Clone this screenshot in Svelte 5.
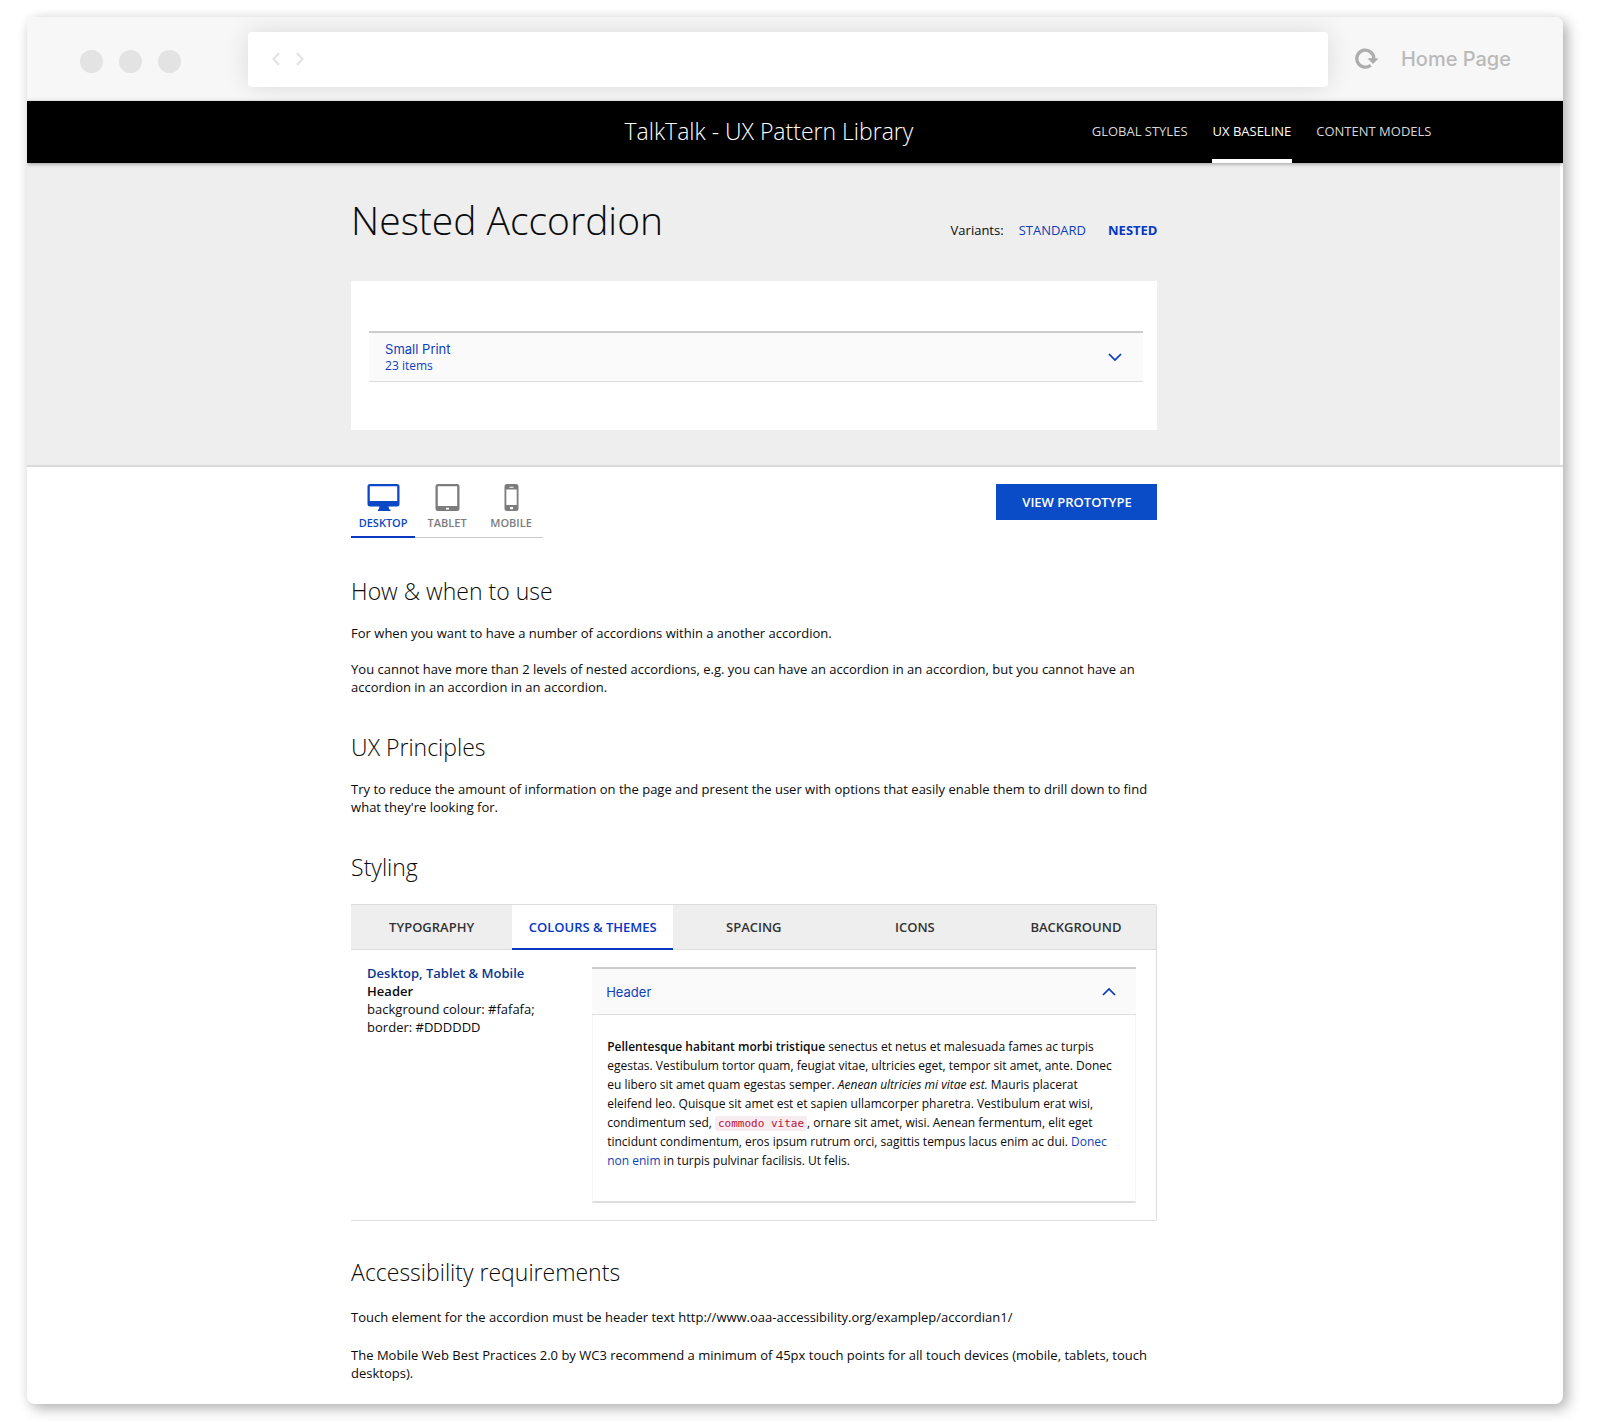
<script>
  const nav = ['GLOBAL STYLES', 'UX BASELINE', 'CONTENT MODELS'];
  const tabs = ['TYPOGRAPHY', 'COLOURS & THEMES', 'SPACING', 'ICONS', 'BACKGROUND'];
  let section = $state('UX BASELINE');
  let device = $state('desktop');
  let tab = $state('COLOURS & THEMES');
</script>

{#snippet chevron(up)}
  <svg class="chevron" class:up width="14" height="10" viewBox="0 0 14 10" aria-hidden="true">
    <path d="M1 2 7 8 13 2" fill="none" stroke="#0638c4" stroke-width="1.700" />
  </svg>
{/snippet}

<div class="window">
  <div class="chrome">
    <div class="dots"><span></span><span></span><span></span></div>
    <div class="address">
      <button aria-label="Back">
        <svg width="8" height="14" viewBox="0 0 8 14"><path d="M7 1 1.500 7 7 13" fill="none" stroke="#e2e2e2" stroke-width="2" /></svg>
      </button>
      <button aria-label="Forward">
        <svg width="8" height="14" viewBox="0 0 8 14"><path d="M1 1 6.500 7 1 13" fill="none" stroke="#e2e2e2" stroke-width="2" /></svg>
      </button>
    </div>
    <div class="actions">
      <button aria-label="Reload">
        <svg width="24" height="22" viewBox="0 0 24 22">
          <path d="M15.700 17.200A8.500 8.500 0 1 1 18.800 11.500" fill="none" stroke="#adadad" stroke-width="3.300" />
          <path d="M12.500 10.500 18 10 23.500 10.500 18 16z" fill="#adadad" />
        </svg>
      </button>
      <a href="#home">Home Page</a>
    </div>
  </div>

  <header>
    <div class="brand">TalkTalk - UX Pattern Library</div>
    <nav>
      {#each nav as item}
        <a href="#nav" class:active={section === item} onclick={() => (section = item)}>{item}</a>
      {/each}
    </nav>
  </header>

  <div class="hero">
    <div class="column">
      <div class="title">
        <h1>Nested Accordion</h1>
        <div class="variants">
          <span>Variants:</span>
          <a href="#standard">STANDARD</a>
          <a href="#nested" class="active">NESTED</a>
        </div>
      </div>
      <div class="preview">
        <button class="accordion" aria-expanded="false">
          <span class="labels"><span class="name">Small Print</span><span class="count">23 items</span></span>
          {@render chevron(false)}
        </button>
      </div>
    </div>
  </div>

  <main>
    <div class="column">
      <div class="toolbar">
        <div class="devices" role="tablist" aria-label="Device">
          <button role="tab" aria-selected={device === 'desktop'} onclick={() => (device = 'desktop')}>
            <svg width="33" height="28" viewBox="0 0 33 28" fill="currentColor">
              <path fill-rule="evenodd" d="M3 0h27a2.500 2.500 0 0 1 2.500 2.500v17.500a2.500 2.500 0 0 1-2.500 2.500h-8.500l.8 3h1.200V27H11v-1.500h.7l.8-3H3A2.500 2.500 0 0 1 .5 20V2.500A2.500 2.500 0 0 1 3 0zM2.800 2.200V17h27.400V2.200z" />
            </svg>
            DESKTOP
          </button>
          <button role="tab" aria-selected={device === 'tablet'} onclick={() => (device = 'tablet')}>
            <svg width="25" height="28" viewBox="0 0 25 28" fill="currentColor">
              <path fill-rule="evenodd" d="M3 0h19A2.500 2.500 0 0 1 24.500 2.500v22A2.500 2.500 0 0 1 22 27H3a2.500 2.500 0 0 1-2.500-2.500v-22A2.500 2.500 0 0 1 3 0zM2.800 2.200V22h19.400V2.200zM11 23.700v1.800h3v-1.800z" />
            </svg>
            TABLET
          </button>
          <button role="tab" aria-selected={device === 'mobile'} onclick={() => (device = 'mobile')}>
            <svg width="15" height="28" viewBox="0 0 15 28" fill="currentColor">
              <path fill-rule="evenodd" d="M3 0h9A2.500 2.500 0 0 1 14.500 2.500v22A2.500 2.500 0 0 1 12 27H3a2.500 2.500 0 0 1-2.500-2.500v-22A2.500 2.500 0 0 1 3 0zM2.300 5.500V21h10.400V5.500zM5.500 2.800v1h4v-1zM6 23v2.300h3V23z" />
            </svg>
            MOBILE
          </button>
        </div>
        <button class="primary">VIEW PROTOTYPE</button>
      </div>

      <section>
        <h2>How &amp; when to use</h2>
        <p>For when you want to have a number of accordions within a another accordion.</p>
        <p>You cannot have more than 2 levels of nested accordions, e.g. you can have an accordion in an accordion, but you cannot have an accordion in an accordion in an accordion.</p>
      </section>

      <section>
        <h2>UX Principles</h2>
        <p>Try to reduce the amount of information on the page and present the user with options that easily enable them to drill down to find what they're looking for.</p>
      </section>

      <section>
        <h2>Styling</h2>
        <div class="panel">
          <div class="tabs" role="tablist" aria-label="Styling">
            {#each tabs as item}
              <button role="tab" aria-selected={tab === item} onclick={() => (tab = item)}>{item}</button>
            {/each}
          </div>
          <div class="panel-body">
            <div class="spec">
              <h3>Desktop, Tablet &amp; Mobile</h3>
              <strong>Header</strong>
              <div>background colour: #fafafa;</div>
              <div>border: #DDDDDD</div>
            </div>
            <div class="example">
              <button class="accordion open" aria-expanded="true">
                <span class="name">Header</span>
                {@render chevron(true)}
              </button>
              <div class="copy">
                <b>Pellentesque habitant morbi tristique</b> senectus et netus et malesuada fames ac turpis egestas. Vestibulum tortor quam, feugiat vitae, ultricies eget, tempor sit amet, ante. Donec eu libero sit amet quam egestas semper. <em>Aenean ultricies mi vitae est.</em> Mauris placerat eleifend leo. Quisque sit amet est et sapien ullamcorper pharetra. Vestibulum erat wisi, condimentum sed, <code>commodo vitae</code>, ornare sit amet, wisi. Aenean fermentum, elit eget tincidunt condimentum, eros ipsum rutrum orci, sagittis tempus lacus enim ac dui. <a href="#donec">Donec non enim</a> in turpis pulvinar facilisis. Ut felis.
              </div>
            </div>
          </div>
        </div>
      </section>

      <section class="relaxed">
        <h2>Accessibility requirements</h2>
        <p>Touch element for the accordion must be header text http://www.oaa-accessibility.org/examplep/accordian1/</p>
        <p>The Mobile Web Best Practices 2.0 by WC3 recommend a minimum of 45px touch points for all touch devices (mobile, tablets, touch desktops).</p>
      </section>
    </div>
  </main>
</div>

<style>
  :global(body) {
    background: #fff;
    color: #0a0a0a;
    font: 13px/18px 'Open Sans', 'Noto Sans', sans-serif;
  }
  * {
    box-sizing: border-box;
  }
  a {
    color: #0d3fb8;
    text-decoration: none;
  }
  button {
    margin: 0;
    padding: 0;
    border: 0;
    background: none;
    color: inherit;
    font: inherit;
    cursor: pointer;
  }
  svg {
    display: block;
    flex: none;
  }
  h1, h2, h3, p {
    margin: 0;
  }
  .window {
    margin: 17px 34px 18px 27px;
    border-radius: 8px;
    overflow: hidden;
    background: #fff;
    box-shadow: 5px 5px 14px rgba(0, 0, 0, 0.28), 0 0 12px rgba(0, 0, 0, 0.06);
  }

  .chrome {
    display: flex;
    align-items: center;
    height: 84px;
    padding: 0 52px 0 53px;
    background: #f7f7f7;
    overflow: hidden;
  }
  .dots {
    display: flex;
    gap: 16px;
    padding-top: 4px;
    margin-right: 67px;
  }
  .dots span {
    width: 23px;
    height: 23px;
    border-radius: 50%;
    background: #e3e3e3;
  }
  .address {
    flex: 1;
    display: flex;
    align-items: center;
    gap: 16px;
    height: 55px;
    padding-left: 24px;
    border-radius: 4px;
    background: #fff;
    box-shadow: 0 0 24px rgba(0, 0, 0, 0.12);
  }
  .actions {
    display: flex;
    align-items: center;
    gap: 22px;
    margin-left: 27px;
  }
  .actions a {
    color: #bababa;
    font: 500 20px/24px Inter, sans-serif;
  }

  header {
    position: relative;
    display: flex;
    justify-content: space-between;
    height: 62px;
    padding: 0 8.5% 0 38.9%;
    background: #000;
    color: #fff;
    box-shadow: 0 1px 4px rgba(0, 0, 0, 0.35);
  }
  .brand {
    font-size: 23px;
    font-weight: 300;
    line-height: 61px;
    white-space: nowrap;
  }
  nav {
    display: flex;
    gap: 23px;
  }
  nav a {
    padding: 0 1px;
    border-bottom: 4px solid transparent;
    color: #d8d8d8;
    line-height: 60px;
    white-space: nowrap;
  }
  nav a.active {
    border-color: #fff;
    color: #fff;
    font-weight: 500;
  }

  .column {
    width: 52.5%;
    margin-left: 21.1%;
  }
  .hero {
    height: 304px;
    border-bottom: 2px solid #dadada;
    background: #eee;
    box-shadow: inset -3px 0 #fff;
  }
  .title {
    display: flex;
    justify-content: space-between;
    align-items: baseline;
    padding-top: 29px;
  }
  h1 {
    font-size: 39px;
    font-weight: 300;
    line-height: 56px;
  }
  .variants {
    display: flex;
  }
  .variants a {
    margin-left: 15px;
  }
  .variants .active {
    margin-left: 22px;
    font-weight: 700;
    color: #0638c4;
  }
  .preview {
    margin-top: 33px;
    padding: 50px 14px 48px 18px;
    background: #fff;
  }
  .accordion {
    display: flex;
    align-items: center;
    justify-content: space-between;
    width: 100%;
    height: 51px;
    padding: 0 21px 0 16px;
    border-top: 2px solid #ccc;
    border-bottom: 1px solid #ddd;
    background: #fafafa;
    color: #0d3fc0;
    text-align: left;
  }
  .labels {
    display: flex;
    flex-direction: column;
  }
  .name {
    font: 13px/16px Inter, sans-serif;
  }
  .count {
    font-size: 12px;
    font-weight: 500;
    line-height: 17px;
  }
  .chevron.up {
    transform: rotate(180deg);
  }

  main {
    padding: 17px 0 22px;
  }
  .toolbar {
    display: flex;
    justify-content: space-between;
    align-items: flex-start;
    padding-bottom: 2px;
  }
  .devices {
    display: flex;
  }
  .devices button {
    display: flex;
    flex-direction: column;
    align-items: center;
    width: 64px;
    height: 54px;
    gap: 2px;
    border-bottom: 1px solid #ccc;
    color: #7c7c7c;
    font-size: 11px;
    font-weight: 600;
    line-height: 18px;
  }
  .devices button[aria-selected='true'] {
    border-color: #0638c4;
    box-shadow: inset 0 -1px #0638c4;
    color: #0a48c6;
  }
  .primary {
    width: 161px;
    height: 36px;
    background: #0a4cc8;
    color: #fff;
    font-weight: 600;
  }

  section {
    margin-top: 35px;
  }
  h2 {
    margin-bottom: 17px;
    font-size: 23px;
    font-weight: 300;
    line-height: 32px;
  }
  p + p {
    margin-top: 18px;
  }
  .relaxed h2 {
    margin-bottom: 20px;
  }
  .relaxed p + p {
    margin-top: 20px;
  }

  .panel {
    margin-top: 21px;
    border: solid #ddd;
    border-width: 1px 1px 1px 0;
    border-radius: 0 2px 2px 0;
  }
  .tabs {
    display: grid;
    grid-template-columns: repeat(5, 1fr);
    background: #eee;
  }
  .tabs button {
    height: 45px;
    border-bottom: 1px solid #ddd;
    color: #333;
    font-weight: 600;
  }
  .tabs button[aria-selected='true'] {
    border-color: #0638c4;
    box-shadow: inset 0 -1px #0638c4;
    background: #fff;
    color: #0638c4;
  }
  .panel-body {
    display: grid;
    grid-template-columns: 225fr 544fr;
    padding: 17px 20px 17px 16px;
  }
  .spec {
    margin-top: -3px;
  }
  h3 {
    color: #0b3690;
    font-size: 13px;
    font-weight: 600;
    line-height: 18px;
  }
  strong {
    font-weight: 600;
  }
  .accordion.open {
    height: 48px;
    padding: 0 20px 0 14px;
  }
  .copy {
    padding: 22px 14px 31px 14px;
    border: solid #f6f6f6;
    border-width: 0 1px;
    border-bottom: 2px solid #ddd;
    font-size: 12px;
    line-height: 19px;
  }
  b {
    font-weight: 600;
  }
  code {
    padding: 1px 3px;
    border-radius: 3px;
    background: #f7ecf0;
    color: #b8123e;
    font: 11px/15px 'DejaVu Sans Mono', monospace;
  }
</style>
